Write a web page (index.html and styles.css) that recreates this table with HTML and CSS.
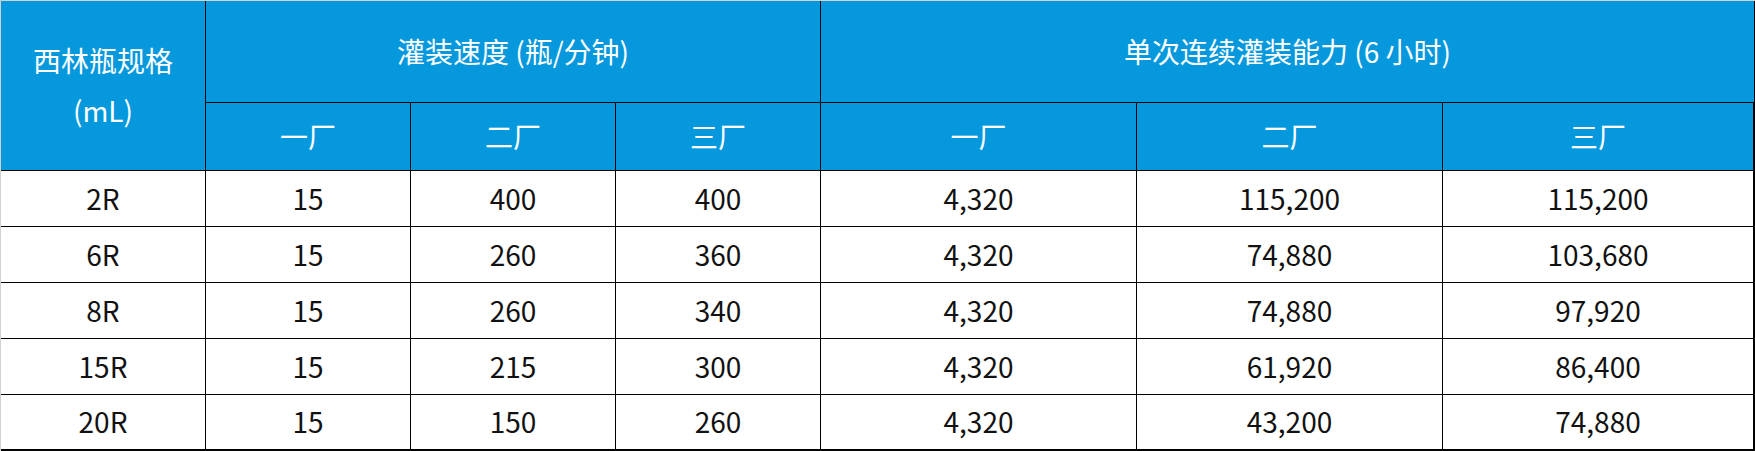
FILE: index.html
```html
<!DOCTYPE html>
<html lang="zh-CN">
<head>
<meta charset="utf-8">
<title>西林瓶灌装能力</title>
<link rel="stylesheet" href="styles.css">
</head>
<body>
<div class="sheet">
  <div class="grid">
    <div class="cell head spec">西林瓶规格<br>(mL)</div>
    <div class="cell head group speed">灌装速度 (瓶/分钟)</div>
    <div class="cell head group capacity">单次连续灌装能力 (6 小时)</div>
    <div class="cell head sub">一厂</div>
    <div class="cell head sub">二厂</div>
    <div class="cell head sub">三厂</div>
    <div class="cell head sub">一厂</div>
    <div class="cell head sub">二厂</div>
    <div class="cell head sub">三厂</div>

    <div class="cell">2R</div><div class="cell">15</div><div class="cell">400</div><div class="cell">400</div><div class="cell">4,320</div><div class="cell">115,200</div><div class="cell">115,200</div>
    <div class="cell">6R</div><div class="cell">15</div><div class="cell">260</div><div class="cell">360</div><div class="cell">4,320</div><div class="cell">74,880</div><div class="cell">103,680</div>
    <div class="cell">8R</div><div class="cell">15</div><div class="cell">260</div><div class="cell">340</div><div class="cell">4,320</div><div class="cell">74,880</div><div class="cell">97,920</div>
    <div class="cell">15R</div><div class="cell">15</div><div class="cell">215</div><div class="cell">300</div><div class="cell">4,320</div><div class="cell">61,920</div><div class="cell">86,400</div>
    <div class="cell">20R</div><div class="cell">15</div><div class="cell">150</div><div class="cell">260</div><div class="cell">4,320</div><div class="cell">43,200</div><div class="cell">74,880</div>
  </div>
</div>
</body>
</html>
```
FILE: styles.css
```css
html, body {
  margin: 0;
  padding: 0;
  background: #ffffff;
}

body {
  font-family: "Noto Sans CJK SC", "Noto Sans", sans-serif;
  font-size: 28px;
  color: #111111;
}

.sheet {
  border-top: 1px solid #d2d2d2;
  border-left: 1px solid #d2d2d2;
  width: 1754px;
}

.grid {
  display: grid;
  grid-template-columns: 205px 205px 205px 205px 316px 306px 312px;
  grid-template-rows: 102px 68px repeat(5, 56px);
}

.cell {
  box-sizing: border-box;
  border-right: 1px solid #000;
  border-bottom: 1px solid #000;
  display: flex;
  align-items: center;
  justify-content: center;
  text-align: center;
  line-height: 1.2;
  white-space: nowrap;
}

.cell:nth-child(7n+9) {
  border-right-width: 2px;
}

.head {
  background: #0698dd;
  color: #ffffff;
}

.spec {
  grid-row: 1 / span 2;
  line-height: 50px;
  padding-bottom: 2px;
}

.group {
  grid-column: span 3;
}

.grid > .cell:nth-last-child(-n+7) {
  border-bottom-width: 2px;
}
```
